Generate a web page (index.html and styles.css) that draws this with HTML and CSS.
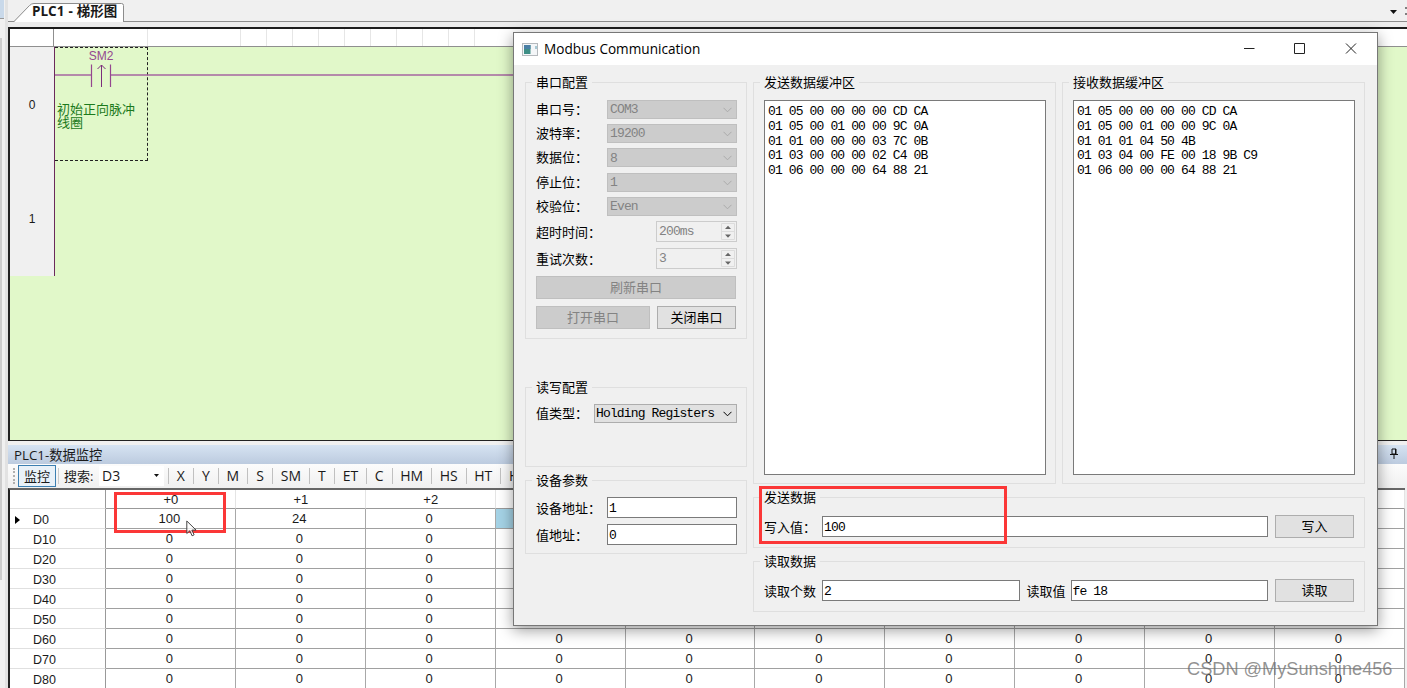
FILE: index.html
```
<!DOCTYPE html>
<html lang="zh-CN">
<head>
    <meta charset="UTF-8">
    <meta name="viewport" content="width=device-width, initial-scale=1.0">
    <title>Modbus Communication</title>
    <link rel="stylesheet" href="styles.css">
</head>
<body>
    <div class="app">
        <div class="side">
            <div class="side-top"></div>
            <div class="side-bar"></div>
        </div>
        <div class="main">
            <div class="tabs">
                <svg class="tab-shape" width="118" height="22" viewBox="0 0 118 22">
                    <path d="M5 22 L20.5 5.5 Q22.5 3.5 25 3.5 H112.5 Q114.5 3.5 114.5 5.5 V22 Z" fill="#fff"/>
                    <path d="M5 21.5 L20.5 5.5 Q22.5 3.5 25 3.5 H112.5 Q114.5 3.5 114.5 5.5 V22" fill="none" stroke="#8c8c8c"/>
                </svg>
                <span class="tab-text">PLC1 - 梯形图</span>
                <svg class="tab-menu" width="18" height="10" viewBox="0 0 18 10">
                    <path d="M1 3h7l-3.5 4z" fill="#111"/>
                    <path d="M16 1h2M16 7h2" stroke="#111"/>
                </svg>
            </div>

            <div class="ladder">
                <div class="ruler">
                    <i class="r0"></i><i class="r1"></i><i class="r2"></i><i></i><i></i><i></i><i></i><i></i><i></i><i></i><i></i><i></i>
                </div>
                <div class="rungs">
                    <div class="gutter">
                        <div>0</div>
                        <div>1</div>
                    </div>
                    <div class="network">
                        <div class="cell">
                            <span class="dev">SM2</span>
                            <p>初始正向脉冲线圈</p>
                        </div>
                        <svg class="wire" width="460" height="46" viewBox="0 0 460 46">
                            <path d="M0 28H37M56 28H460" stroke="#a566a0" stroke-width="1.4"/>
                            <path d="M36.5 17.5V40M55.5 17.5V40" stroke="#94478f" stroke-width="1.2"/>
                            <path d="M46.5 40V18M42.5 22l4-4 4 4" fill="none" stroke="#7b2d7b"/>
                        </svg>
                    </div>
                </div>
            </div>

            <div class="monitor-title">
                <span>PLC1-数据监控</span>
                <svg width="10" height="12" viewBox="0 0 10 12"><path d="M3 1h4v5h-4zM6.5 1v5M1 6.5h8M5 7v4" fill="none" stroke="#111"/></svg>
            </div>
            <div class="toolbar">
                <span class="grip"></span>
                <span class="watch">监控</span>
                <span class="find">搜索:</span>
                <span class="find-box">D3<svg width="6" height="4"><path d="M0 0h5l-2.500 3z" fill="#111"/></svg></span>
                <span class="tool">X</span><span class="tool">Y</span><span class="tool">M</span><span class="tool">S</span><span class="tool">SM</span><span class="tool">T</span><span class="tool">ET</span><span class="tool">C</span><span class="tool">HM</span><span class="tool">HS</span><span class="tool">HT</span><span class="tool">H</span>
            </div>
            <div class="grid" id="grid"></div>
        </div>
    </div>

    <div class="mark mark-cell"></div>
    <svg class="cursor" width="13" height="18" viewBox="0 0 13 18"><path d="M.8 1v12.500l3-2.700 2.300 5 2-1-2.200-4.700h4.200z" fill="#fff" fill-opacity=".75" stroke="#444"/></svg>

    <div class="dialog">
        <div class="titlebar">
            <svg width="16" height="13" viewBox="0 0 16 13">
                <rect x=".5" y=".5" width="15" height="12" fill="#f4f6f8" stroke="#b5b9bd"/>
                <rect x="2" y="2" width="6.500" height="9" fill="#3f8f86"/>
                <rect x="2" y="2" width="6.500" height="4" fill="#4a7fa5"/>
                <path d="M14 3v3" stroke="#5a9bb0"/>
            </svg>
            <span>Modbus Communication</span>
            <svg class="win-btns" width="114" height="12" viewBox="0 0 114 12">
                <path d="M1 5.500h10.500M51.500 .5h10v10h-10zM103 .5l10 10M113 .5l-10 10" fill="none" stroke="#222"/>
            </svg>
        </div>
        <div class="content">
            <div class="left">
                <fieldset class="port">
                    <legend>串口配置</legend>
                    <div class="row"><label>串口号：</label><div class="combo off">COM3</div></div>
                    <div class="row"><label>波特率：</label><div class="combo off">19200</div></div>
                    <div class="row"><label>数据位：</label><div class="combo off">8</div></div>
                    <div class="row"><label>停止位：</label><div class="combo off">1</div></div>
                    <div class="row"><label>校验位：</label><div class="combo off">Even</div></div>
                    <div class="row tall"><label>超时时间：</label><div class="spin">200ms</div></div>
                    <div class="row tall"><label>重试次数：</label><div class="spin">3</div></div>
                    <div class="buttons">
                        <button class="refresh" disabled>刷新串口</button>
                        <button disabled>打开串口</button>
                        <button>关闭串口</button>
                    </div>
                </fieldset>
                <fieldset class="rw">
                    <legend>读写配置</legend>
                    <div class="row"><label>值类型：</label><div class="combo wide">Holding Registers</div></div>
                </fieldset>
                <fieldset class="device">
                    <legend>设备参数</legend>
                    <div class="row tall"><label>设备地址：</label><input type="text" value="1"></div>
                    <div class="row tall"><label>值地址：</label><input type="text" value="0"></div>
                </fieldset>
            </div>
            <div class="right">
                <div class="buffers">
                    <fieldset>
                        <legend>发送数据缓冲区</legend>
                        <pre>01 05 00 00 00 00 CD CA
01 05 00 01 00 00 9C 0A
01 01 00 00 00 03 7C 0B
01 03 00 00 00 02 C4 0B
01 06 00 00 00 64 88 21</pre>
                    </fieldset>
                    <fieldset>
                        <legend>接收数据缓冲区</legend>
                        <pre>01 05 00 00 00 00 CD CA
01 05 00 01 00 00 9C 0A
01 01 01 04 50 4B
01 03 04 00 FE 00 18 9B C9
01 06 00 00 00 64 88 21</pre>
                    </fieldset>
                </div>
                <fieldset class="io">
                    <legend>发送数据</legend>
                    <div class="io-row"><label>写入值：</label><input type="text" value="100"><button>写入</button></div>
                </fieldset>
                <fieldset class="io">
                    <legend>读取数据</legend>
                    <div class="io-row"><label>读取个数</label><input type="text" value="2"><label class="second">读取值</label><input type="text" value="fe 18"><button>读取</button></div>
                </fieldset>
            </div>
        </div>
    </div>

    <div class="mark mark-send"></div>
    <div class="watermark">CSDN @MySunshine456</div>

    <script>
        const grid = document.getElementById("grid");
        const chevron = '<svg class="chev" width="9" height="6" viewBox="0 0 9 6"><path d="M.5 .8l4 4 4-4" fill="none" stroke="currentColor"/></svg>';

        function addCell(text, cls) {
            const cell = document.createElement("div");
            cell.className = cls;
            cell.textContent = text;
            grid.appendChild(cell);
        }

        addCell("", "corner");
        for (let c = 0; c < 10; c++) {
            // headers from +3 on are behind the dialog
            addCell(c < 3 ? "+" + c : "", "col-head");
        }
        for (let r = 0; r < 9; r++) {
            addCell("D" + r * 10, r === 0 ? "row-head current" : "row-head");
            for (let c = 0; c < 10; c++) {
                let value = 0;
                if (r === 0 && c === 0) value = 100;
                if (r === 0 && c === 1) value = 24;
                if (r < 6 && c > 2) value = "";
                addCell(value, r === 0 && c === 3 ? "val selected" : "val");
            }
        }

        document.querySelectorAll(".combo").forEach(function(el) {
            el.insertAdjacentHTML("beforeend", chevron);
        });
        document.querySelectorAll(".spin").forEach(function(el) {
            el.insertAdjacentHTML("beforeend", '<svg width="14" height="17" viewBox="0 0 14 17"><path d="M.5 .5h13v16h-13zM.5 8.500h13" fill="none" stroke="#dcdcdc"/><path d="M4 6l3-3.200 3 3.200zM4 11.500l3 3.200 3-3.200z" fill="#666"/></svg>');
        });
    </script>
</body>
</html>
```
FILE: styles.css
```
* {
    box-sizing: border-box;
}

body {
    margin: 0;
    height: 688px;
    overflow: hidden;
    position: relative;
    background-color: #f0f0f0;
    font-family: "Liberation Sans", "Noto Sans CJK SC", sans-serif;
    font-size: 13px;
    color: #1a1a1a;
}

.app {
    display: flex;
    height: 688px;
}

.side {
    width: 8px;
    flex: none;
    border-right: 3px solid #e2e2e2;
}

.side-top {
    width: 4px;
    height: 19px;
    background-color: #c9d9ea;
    border-bottom: 1px solid #999;
}

.side-bar {
    width: 2px;
    height: 542px;
    margin-top: 19px;
    background-color: #cdcdcd;
}

.main {
    flex: 1;
    min-width: 0;
}

/* tabs */
.tabs {
    display: flex;
    height: 27px;
    position: relative;
    background: linear-gradient(#f0f0f0 21px, #8c8c8c 21px, #8c8c8c 22px, #ececec 22px);
}

.tab-shape {
    margin-left: 1px;
    flex: none;
}

.tab-text {
    position: absolute;
    left: 24px;
    top: 1px;
    font: bold 13.5px/21px "Open Sans", "Noto Sans CJK SC", sans-serif;
    white-space: nowrap;
    word-spacing: 0.5px;
}

.tab-menu {
    margin: 7px 0 0 auto;
}

/* ladder editor */
.ladder {
    height: 414px;
    border-top: 2px solid #1c1c1c;
    border-left: 2px solid #222;
    border-bottom: 1px solid #222;
    background-color: #e1f8c9;
}

.ruler {
    display: flex;
    height: 18px;
    background-color: #fff;
    border-bottom: 1px solid #8f8f8f;
}

.ruler i {
    flex: none;
    width: 26px;
    border-right: 1px solid #e6e6e6;
}

.ruler .r0 {
    width: 44px;
    border-right-color: #8f8f8f;
}

.ruler .r1 {
    width: 94px;
}

.ruler .r2 {
    width: 93px;
}

.rungs {
    display: flex;
    height: 229px;
}

.gutter {
    width: 45px;
    background-color: #f0f0f0;
    border-right: 1px solid #6b2a5b;
    font-size: 12px;
    text-align: center;
    line-height: 116px;
}

.gutter div {
    height: 114px;
}

.network {
    position: relative;
    flex: 1;
    min-width: 0;
    overflow: hidden;
}

.cell {
    width: 93px;
    height: 114px;
    border: 1px dashed #222;
    border-left: none;
    color: #1c7a1c;
}

.dev {
    display: block;
    padding-top: 1px;
    text-align: center;
    font-size: 12px;
    line-height: 14px;
    color: #94478f;
}

.cell p {
    margin: 40px 8px 0 2px;
    font-family: "Noto Sans CJK SC", sans-serif;
    font-size: 13px;
    line-height: 12.5px;
}

.wire {
    position: absolute;
    left: 0;
    top: 0;
}

/* data monitor */
.monitor-title {
    display: flex;
    align-items: center;
    justify-content: space-between;
    height: 19px;
    margin-top: 4px;
    padding: 2px 8px 0 6px;
    background: linear-gradient(#d6e3f2, #bccbdf);
    font: 13.3px/17px "Open Sans", "Noto Sans CJK SC", sans-serif;
}

.monitor-title svg {
    margin-bottom: 3px;
}

.toolbar {
    display: flex;
    height: 24px;
    align-items: center;
    background: linear-gradient(#fcfcfc, #f0f0f0);
    font: 14px/20px "Open Sans", "Noto Sans CJK SC", sans-serif;
}

.grip {
    width: 2px;
    height: 16px;
    margin: 0 3px 0 5px;
    border-left: 2px dotted #b0b0b0;
}

.watch {
    width: 38px;
    height: 22px;
    border: 1px solid #3c7fb1;
    background-color: #e9f1f8;
    font-size: 13px;
    text-align: center;
}

.find {
    margin: 0 4px 0 2px;
    padding-left: 5px;
    border-left: 1px solid #ccc;
    font-size: 13px;
    line-height: 16px;
    width: 37px;
    white-space: nowrap;
}

.find-box {
    display: flex;
    justify-content: space-between;
    align-items: center;
    width: 65px;
    margin-right: 4px;
    padding: 0 4px 0 3px;
    background-color: #fff;
}

.tool {
    min-width: 25px;
    padding: 0 8px 0 7.6px;
    border-left: 1px solid #c0c0c0;
    text-align: center;
    line-height: 16px;
}

.grid {
    display: grid;
    grid-template-columns: 96px repeat(10, 129.9px);
    grid-template-rows: 19px;
    grid-auto-rows: 20px;
    height: 200px;
    width: 1397px;
    overflow: hidden;
    border-top: 2px solid #666;
    border-left: 2px solid #222;
    background-color: #fff;
    font-size: 13px;
    line-height: 19px;
    text-align: center;
}

.corner, .row-head {
    border-right: 1px solid #999;
    border-bottom: 1px solid #e0e0e0;
}

.col-head {
    padding-left: 1px;
    border-right: 1px solid #e4e4e4;
    border-bottom: 1px solid #999;
}

.row-head {
    padding-left: 23px;
    padding-top: 2px;
    line-height: 18px;
    text-align: left;
    font-size: 12.5px;
    position: relative;
}

.current::before {
    content: "";
    position: absolute;
    left: 5px;
    top: 7px;
    border-left: 5px solid #000;
    border-top: 4px solid transparent;
    border-bottom: 4px solid transparent;
}

.val {
    padding-right: 2px;
    border-right: 1px solid #a8a8a8;
    border-bottom: 1px solid #a0a0a0;
}

.selected {
    background-color: #a5d3e6;
}

/* highlight boxes */
.mark {
    position: absolute;
    border: 3px solid #fb3737;
}

.mark-cell {
    left: 114px;
    top: 492px;
    width: 112px;
    height: 41px;
}

.mark-send {
    left: 759px;
    top: 486px;
    width: 248px;
    height: 58px;
}

.cursor {
    position: absolute;
    left: 186px;
    top: 520px;
}

/* dialog */
.dialog {
    position: absolute;
    left: 513px;
    top: 32px;
    width: 865px;
    height: 594px;
    border: 1px solid #777;
    background-color: #f0f0f0;
    box-shadow: 0 4px 14px rgba(0, 0, 0, 0.4);
    font-family: "Liberation Mono", "Noto Sans CJK SC", monospace;
    color: #000;
}

.titlebar {
    display: flex;
    align-items: center;
    height: 32px;
    padding: 0 20px 0 8px;
    background-color: #fff;
    font: 13.6px/32px "Open Sans", sans-serif;
}

.titlebar span {
    margin-left: 6px;
}

.win-btns {
    margin-left: auto;
}

.content {
    display: grid;
    grid-template-columns: 222px 612px;
    gap: 6px;
    padding: 8px 0 0 11px;
}

fieldset {
    min-width: 0;
    margin: 0;
    padding: 0 9px 0 10px;
    border: 1px solid #dfdfdf;
}

legend {
    height: 18px;
    margin-left: -4px;
    padding: 0 4px;
    line-height: 21px;
}

.port {
    height: 266px;
    padding-top: 6px;
}

.rw {
    height: 89px;
    margin-top: 39px;
    padding-top: 5px;
}

.device {
    height: 83px;
    margin-top: 4px;
    padding-top: 5px;
}

.row {
    display: flex;
    align-items: center;
    justify-content: space-between;
    height: 24.3px;
}

.tall {
    height: 26.8px;
}

label {
    padding-bottom: 2px;
    white-space: nowrap;
}

.tall label, .io-row label {
    padding-bottom: 0;
}

.combo {
    display: flex;
    align-items: center;
    justify-content: space-between;
    width: 130px;
    height: 19px;
    padding: 1px 4px 0 2px;
    border: 1px solid #adadad;
    background-color: #e1e1e1;
    letter-spacing: -0.85px;
    white-space: nowrap;
}

.combo.off {
    border-color: #bfbfbf;
    background-color: #ccc;
    color: #838383;
}

.off .chev {
    color: #aaa;
}

.wide {
    width: 143px;
    padding-left: 1px;
}

.spin {
    display: flex;
    align-items: center;
    justify-content: space-between;
    width: 81px;
    height: 21px;
    padding: 0 1px 0 2px;
    border: 1px solid #ccc;
    letter-spacing: -0.85px;
    color: #838383;
}

input {
    width: 130px;
    height: 21px;
    padding: 2px 1px 0;
    border: 1px solid #7a7a7a;
    background-color: #fff;
    font-family: inherit;
    font-size: 13px;
    letter-spacing: -0.85px;
}

button {
    height: 23px;
    padding: 2px 0 0;
    border: 1px solid #adadad;
    background-color: #e1e1e1;
    font-family: inherit;
    font-size: 13px;
    line-height: 19px;
    color: #000;
}

button:disabled {
    border-color: #bfbfbf;
    background-color: #ccc;
    color: #838383;
}

.buttons {
    display: grid;
    grid-template-columns: 114px 79px;
    gap: 7px;
    margin-top: 4px;
}

.refresh {
    grid-column: span 2;
}

.buffers {
    display: grid;
    grid-template-columns: 303px 303px;
    gap: 6px;
}

.buffers fieldset {
    height: 411px;
    padding-top: 9px;
}

pre {
    height: 375px;
    margin: 0;
    padding: 4px 3px;
    border: 1px solid #7a7a7a;
    background-color: #fff;
    font-family: inherit;
    font-size: 13px;
    line-height: 14.8px;
    letter-spacing: -0.87px;
}

.io {
    height: 60px;
    margin-top: 4px;
    padding: 9px 10px 0;
}

.io-row {
    display: flex;
    align-items: center;
    gap: 7px;
}

.io-row label {
    width: 51px;
}

.io-row .second {
    width: 37px;
}

.io-row input {
    flex: 1;
    min-width: 0;
}

.io-row button {
    width: 79px;
}

.watermark {
    position: absolute;
    left: 1187px;
    top: 658px;
    font-size: 18.2px;
    line-height: 22px;
    color: rgba(110, 110, 110, 0.75);
    white-space: nowrap;
}
```
